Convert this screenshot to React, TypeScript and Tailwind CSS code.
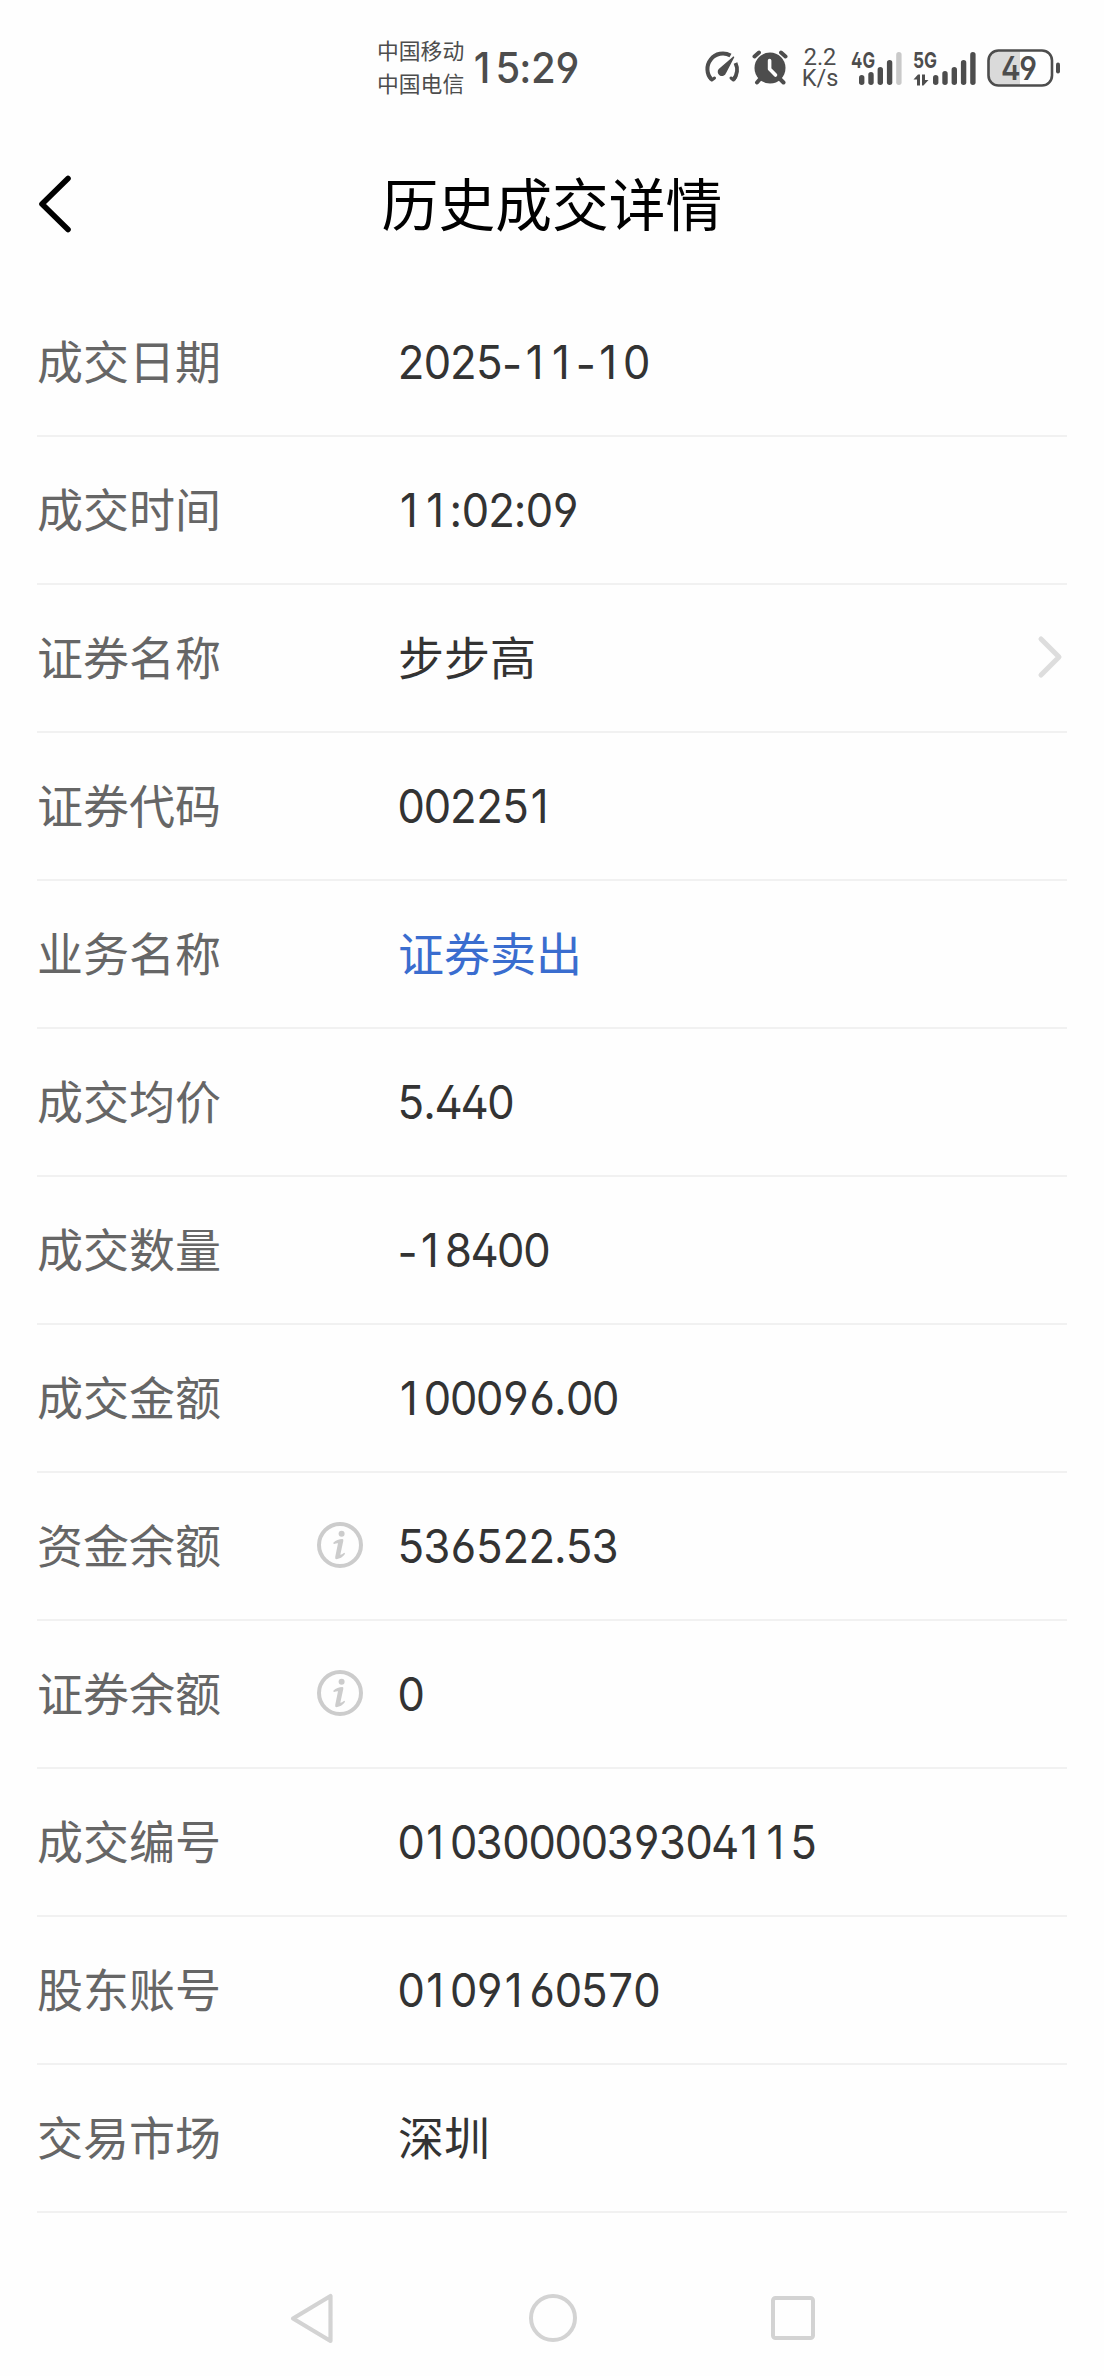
import React from 'react';
import { clsx } from 'clsx';

interface DetailRow {
  label: string;
  value: string;
  info?: boolean;
  link?: boolean;
  highlight?: boolean;
}

const ROWS: DetailRow[] = [
  { label: '成交日期', value: '2025-11-10' },
  { label: '成交时间', value: '11:02:09' },
  { label: '证券名称', value: '步步高', link: true },
  { label: '证券代码', value: '002251' },
  { label: '业务名称', value: '证券卖出', highlight: true },
  { label: '成交均价', value: '5.440' },
  { label: '成交数量', value: '-18400' },
  { label: '成交金额', value: '100096.00' },
  { label: '资金余额', value: '536522.53', info: true },
  { label: '证券余额', value: '0', info: true },
  { label: '成交编号', value: '0103000039304115' },
  { label: '股东账号', value: '0109160570' },
  { label: '交易市场', value: '深圳' },
];

// These take the proportional glyph, padded out to their own width
const NARROW: Record<string, string> = {
  '1': 'tracking-normal pl-[0.07em] pr-[0.125em]',
  '-': 'tracking-normal px-[0.01em] relative top-[0.04em]',
  ':': 'tracking-[-0.02em]',
  '.': 'tracking-[-0.03em]',
};

// Tabular open digits with a plain "1" and narrower punctuation
function Digits({ text, className }: { text: string; className?: string }) {
  return (
    <span
      className={clsx(
        "inline-block origin-left scale-x-[0.94] whitespace-nowrap font-['Inter',sans-serif] tracking-[-0.05em] [font-feature-settings:'tnum','cv02','cv03','cv04']",
        className
      )}
    >
      {text.split(/([-:.1])/).filter(Boolean).map((part, i) =>
        NARROW[part] ? (
          <span key={i} className={clsx("[font-feature-settings:'tnum'_0]", NARROW[part])}>
            {part}
          </span>
        ) : (
          part
        )
      )}
    </span>
  );
}

function StatusIcons() {
  return (
    <svg width="92" height="44" viewBox="700 46 92 44" fill="none" stroke="#4d4d4d" strokeLinecap="round" strokeLinejoin="round">
      {/* Gauge */}
      <path d="M710.5 79.5 A15.5 15.5 0 0 1 729.5 55.5" strokeWidth="4" strokeLinecap="butt" />
      <path d="M734.5 63 A15.5 15.5 0 0 1 732.5 79.5" strokeWidth="4" strokeLinecap="butt" />
      <path d="M708.5 77 L710.8 80 L713.5 78 M734.6 77 L732.4 80 L730 78" strokeWidth="3" />
      <path d="M732.5 57.2 L718.5 69.3 A3.5 3.5 0 1 0 724.3 72.8 Z" fill="#4d4d4d" strokeWidth="1.5" />
      {/* Alarm clock */}
      <circle cx="769" cy="68" r="15.5" fill="#4d4d4d" stroke="none" />
      <path d="M753.5 56.5 L758 52.5 M784.5 56.5 L780 52.5" strokeWidth="4" />
      <path d="M759 79 L756 82.5 M779 79 L782.5 82.5" strokeWidth="4" />
      <path d="M768.6 60.5 V69 L774.5 75" stroke="#fefefe" strokeWidth="3.6" />
    </svg>
  );
}

function Signal({ label, tops, faded, arrows }: { label: string; tops: number[]; faded?: boolean; arrows?: boolean }) {
  return (
    <svg width={arrows ? 64 : 52} height="38" viewBox={arrows ? '0 0 64 38' : '0 0 52 38'} className="shrink-0 overflow-visible">
      <text
        x="0"
        y="19"
        fill="#4d4d4d"
        textLength="24"
        lengthAdjust="spacingAndGlyphs"
        className="font-['Inter',sans-serif] text-[22px] font-bold [font-feature-settings:'cv02']"
      >
        {label}
      </text>
      {arrows && (
        <path d="M7 36.5 V25.5 H5 L0.5 30.5 H4 V36.5 Z M9 25.5 V36.5 H10.5 L15.5 31 H12 V25.5 Z" fill="#4d4d4d" />
      )}
      {tops.map((top, i) => (
        <rect
          key={i}
          x={(arrows ? 20 : 8) + i * 9.3}
          y={top}
          width="5.4"
          height={36 - top}
          rx="2.7"
          fill={faded && i === tops.length - 1 ? '#c9c9c9' : '#4d4d4d'}
        />
      ))}
    </svg>
  );
}

function Battery() {
  return (
    <svg width="74" height="38" viewBox="0 0 74 38" className="shrink-0 overflow-visible">
      <path d="M33 2 H12 A10 10 0 0 0 2 12 V26 A10 10 0 0 0 12 36 H33 Z" fill="#dadada" />
      <rect x="1.5" y="1.5" width="63.5" height="35" rx="10" fill="none" stroke="#4d4d4d" strokeWidth="2.6" />
      <rect x="69" y="13.5" width="4" height="11" rx="2" fill="#4d4d4d" />
      <text
        x="14"
        y="30.5"
        fill="#4d4d4d"
        textLength="36"
        lengthAdjust="spacingAndGlyphs"
        className="font-['Inter',sans-serif] text-[32px] font-semibold [font-feature-settings:'cv02','cv04']"
      >
        49
      </text>
    </svg>
  );
}

function StatusBar() {
  return (
    <div className="flex h-[135px] items-center pl-[377px] text-[#4d4d4d]">
      <div className="w-[94px] whitespace-nowrap pb-[4px] text-[21.8px] leading-[33px]">
        <div>中国移动</div>
        <div>中国电信</div>
      </div>
      <div className="w-[230px] pt-[2px]">
        <Digits text="15:29" className="text-[42.5px] font-medium leading-none" />
      </div>
      <StatusIcons />
      <div className="ml-[9px] flex w-[36px] flex-col items-center pt-px font-['Roboto',sans-serif] text-[23.5px] leading-[21.5px]">
        <span>2.2</span>
        <span>K/s</span>
      </div>
      <div className="ml-[13px] flex">
        <Signal label="4G" tops={[26, 23, 18, 11, 3]} faded />
      </div>
      <div className="ml-[10px] flex">
        <Signal label="5G" tops={[26, 22, 18, 11, 3]} arrows />
      </div>
      <div className="ml-[10px] flex">
        <Battery />
      </div>
    </div>
  );
}

function Header() {
  return (
    <header className="grid h-[154px] grid-cols-[1fr_auto_1fr] items-center pb-[16px] text-black">
      <button className="ml-[36px] justify-self-start" aria-label="返回">
        <svg width="38" height="62" viewBox="0 0 38 62" fill="none" stroke="currentColor" strokeWidth="5.6" strokeLinecap="round" strokeLinejoin="round">
          <path d="M32 5.5 L6 31 L32 56.5" />
        </svg>
      </button>
      <h1 className="pb-[6px] text-[56.8px] leading-none">历史成交详情</h1>
    </header>
  );
}

function InfoIcon() {
  return (
    <svg width="46" height="46" viewBox="0 0 46 46" fill="none" className="shrink-0">
      <circle cx="23" cy="23" r="21" stroke="#ccc" strokeWidth="4" />
      <circle cx="24.6" cy="11.8" r="3" fill="#ccc" />
      <path
        d="M16.5 20.5 Q20 17 25.5 17 Q26.6 17.2 26.3 19 L23.3 32.8 Q25 32.8 27.2 30.8 Q28.6 31 27.6 32.6 Q24.5 36.5 19.5 37.3 Q17.8 37.2 18.2 35 L21 21.2 Q19.2 21 17.2 22 Q15.6 21.8 16.5 20.5 Z"
        fill="#ccc"
      />
    </svg>
  );
}

function Row({ label, value, info, link, highlight }: DetailRow) {
  const isNumeric = /^[-\d]/.test(value);

  return (
    <div className="flex h-[148px] items-center border-b-2 border-[#f1f1f1] text-[46px] leading-none">
      <div className="w-[280px] shrink-0 pb-[7px] text-[#666]">{label}</div>
      <div className="flex w-[81px] shrink-0 pb-[2px]">{info && <InfoIcon />}</div>
      <div className={clsx('flex-1', highlight ? 'text-[#3a6dcf]' : 'text-[#333]', isNumeric ? 'pb-[2px]' : 'pb-[7px]')}>
        {isNumeric ? <Digits text={value} className="-ml-px text-[46.5px]" /> : value}
      </div>
      {link && (
        <svg width="26" height="44" viewBox="0 0 26 44" fill="none" stroke="#ddd" strokeWidth="5" strokeLinecap="round" strokeLinejoin="round" className="mr-[4px] mb-[3px]">
          <path d="M4 4 L22 22 L4 40" />
        </svg>
      )}
    </div>
  );
}

function NavBar() {
  return (
    <nav className="flex h-[163px] items-center justify-between px-[289px] pt-[46px]">
      <svg width="45" height="52" viewBox="0 0 45 52" fill="none" stroke="#d3d3d3" strokeWidth="4.2" strokeLinejoin="round">
        <path d="M4 26.5 L41.5 4 V49 Z" />
      </svg>
      <svg width="48" height="48" viewBox="0 0 48 48" fill="none" stroke="#d3d3d3" strokeWidth="4">
        <circle cx="24" cy="24" r="22" />
      </svg>
      <svg width="44" height="44" viewBox="0 0 44 44" fill="none" stroke="#d3d3d3" strokeWidth="4" className="mt-px">
        <rect x="2" y="2" width="40" height="40" rx="2.5" />
      </svg>
    </nav>
  );
}

export default function App() {
  return (
    <div className="flex h-[2376px] w-[1104px] flex-col overflow-hidden bg-[#fefefe] font-['Noto_Sans_CJK_SC',sans-serif]">
      <StatusBar />
      <Header />
      <main className="px-[37px]">
        {ROWS.map((row) => (
          <Row key={row.label} {...row} />
        ))}
      </main>
      <NavBar />
    </div>
  );
}
